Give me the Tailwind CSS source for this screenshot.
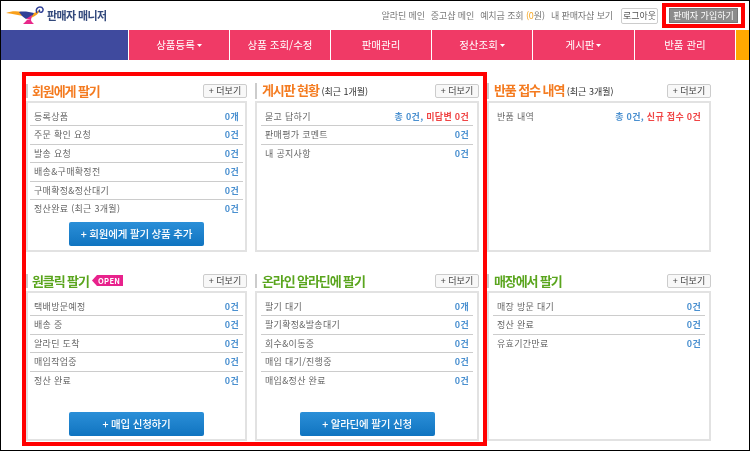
<!DOCTYPE html>
<html lang="ko">
<head>
    <meta charset="UTF-8">
    <title>판매자 매니저</title>
    <script src="https://cdn.jsdelivr.net/npm/@tailwindcss/browser@4"></script>
</head>
<body class="bg-white">
<div class="relative w-[750px] h-[451px] overflow-hidden border border-black bg-white text-[9px] text-[#666] font-['Noto_Sans_CJK_KR','Noto_Sans',sans-serif]">

    <!-- top bar -->
    <header class="h-[29px] flex items-center pl-[5px] pr-[11px] blur-[0.3px]">
        <svg width="38" height="18" viewBox="0 0 38 18" class="mt-[-1px]">
            <path d="M0 7 C5 5 11 5 16 6 L21 11 C14 9 7 8 0 7 Z" fill="#f9a01b"/>
            <path d="M26 8 L34 4 C33 7 30 10 25 12 Z" fill="#f9a01b"/>
            <path d="M13 6 C17 5 24 6 28 7 C27 10 24 12 20 13 C17 11 15 9 13 6 Z" fill="#2f3f96"/>
            <path d="M20 13 L26 9 L25 14 Z" fill="#e8288a"/>
            <path d="M17 18 C19 16 20 15 21 14 L25 14 C25 15 26 16 28 18 Z" fill="#e8288a"/>
            <path d="M31 7 C29 3 32 1 34 1 C37 1 38 4 36 6 C34 7 32 5 34 4" fill="none" stroke="#2f3f96" stroke-width="1.5"/>
        </svg>
        <span class="ml-[3px] text-[11px] font-bold text-[#33497c] tracking-[-0.6px]">판매자 매니저</span>
        <nav class="ml-auto flex items-center gap-[6px] text-[9px] text-[#777] tracking-[-0.1px]">
            <span>알라딘 메인</span>
            <span>중고샵 메인</span>
            <span>예치금 조회 <span class="text-[#f5a623]">(0</span>원)</span>
            <span>내 판매자샵 보기</span>
        </nav>
        <button class="ml-[8px] w-[37px] h-[16px] border border-[#ccc] rounded-[2px] text-[9px] text-[#555] bg-white">로그아웃</button>
        <button class="ml-[11px] w-[69px] h-[15px] border border-[#777] bg-[#8c8c8c] text-[9px] text-white">판매자 가입하기</button>
    </header>

    <!-- main menu -->
    <div class="h-[30px] flex text-[10.5px] text-white blur-[0.3px]">
        <div class="w-[127px] bg-[#3f4a9e] border-r border-white box-content"></div>
        <a class="w-[101px] border-r border-white bg-[#f03a66] flex items-center justify-center gap-[2px]">상품등록 <svg width="5" height="3" viewBox="0 0 5 3"><path d="M0 0H5L2.500 3Z" fill="#fff"/></svg></a>
        <a class="w-[101px] border-r border-white bg-[#f03a66] flex items-center justify-center">상품 조회/수정</a>
        <a class="w-[101px] border-r border-white bg-[#f03a66] flex items-center justify-center">판매관리</a>
        <a class="w-[101px] border-r border-white bg-[#f03a66] flex items-center justify-center gap-[2px]">정산조회 <svg width="5" height="3" viewBox="0 0 5 3"><path d="M0 0H5L2.500 3Z" fill="#fff"/></svg></a>
        <a class="w-[102px] border-r border-white bg-[#f03a66] flex items-center justify-center gap-[2px]">게시판 <svg width="5" height="3" viewBox="0 0 5 3"><path d="M0 0H5L2.500 3Z" fill="#fff"/></svg></a>
        <a class="w-[101px] border-r border-white bg-[#f03a66] flex items-center justify-center">반품 관리</a>
        <div class="flex-1 bg-[#ffa800]"></div>
    </div>

    <!-- dashboard -->
    <main class="grid grid-cols-[221px_224px_224px] grid-rows-[172px_171px] gap-x-[8px] gap-y-[18px] pl-[25px] pt-[20px] tracking-[0.3px] blur-[0.3px]">

        <section class="flex flex-col">
            <div class="h-[21px] flex items-center justify-between">
                <h2 class="border-l-2 border-[#ccc] pl-[4px] text-[13px] leading-[14px] font-bold text-[#f47b20] tracking-[-1.1px]">회원에게 팔기</h2>
                <button class="w-[44px] h-[14px] border border-[#ccc] rounded-[2px] bg-[#f8f8f8] text-[9px] leading-[12px] text-[#444] tracking-normal">+ 더보기</button>
            </div>
            <div class="flex-1 border-2 border-[#e2e2e2] px-[2px] pt-[5px] flex flex-col">
                <div class="h-[18.4px] flex items-center justify-between px-[4px] border-b border-[#ccc]"><span>등록상품</span><b class="font-bold text-[#4a90d0]">0개</b></div>
                <div class="h-[18.4px] flex items-center justify-between px-[4px] border-b border-[#ccc]"><span>주문 확인 요청</span><b class="font-bold text-[#4a90d0]">0건</b></div>
                <div class="h-[18.4px] flex items-center justify-between px-[4px] border-b border-[#ccc]"><span>발송 요청</span><b class="font-bold text-[#4a90d0]">0건</b></div>
                <div class="h-[18.4px] flex items-center justify-between px-[4px] border-b border-[#ccc]"><span>배송&amp;구매확정전</span><b class="font-bold text-[#4a90d0]">0건</b></div>
                <div class="h-[18.4px] flex items-center justify-between px-[4px] border-b border-[#ccc]"><span>구매확정&amp;정산대기</span><b class="font-bold text-[#4a90d0]">0건</b></div>
                <div class="h-[18.4px] flex items-center justify-between px-[4px]"><span>정산완료 (최근 3개월)</span><b class="font-bold text-[#4a90d0]">0건</b></div>
                <button class="mt-[4px] self-center w-[135px] h-[24px] rounded-[2px] bg-gradient-to-b from-[#2a8fd8] to-[#0f74c0] text-[10.5px] font-medium text-white tracking-[-0.2px]">+ 회원에게 팔기 상품 추가</button>
            </div>
        </section>

        <section class="flex flex-col">
            <div class="h-[21px] flex items-center justify-between">
                <h2 class="border-l-2 border-[#ccc] pl-[5px] text-[13px] leading-[14px] font-bold text-[#f47b20] tracking-[-1.1px]">게시판 현황 <span class="text-[9px] font-normal text-[#333] tracking-normal">(최근 1개월)</span></h2>
                <button class="w-[44px] h-[14px] border border-[#ccc] rounded-[2px] bg-[#f8f8f8] text-[9px] leading-[12px] text-[#444] tracking-normal">+ 더보기</button>
            </div>
            <div class="flex-1 border-2 border-[#e2e2e2] px-[4px] pt-[5px] flex flex-col">
                <div class="h-[18.4px] flex items-center justify-between px-[4px] border-b border-[#ccc]"><span>묻고 답하기</span><b class="font-bold text-[#4a90d0]">총 0건, <span class="text-[#f04545]">미답변 0건</span></b></div>
                <div class="h-[18.4px] flex items-center justify-between px-[4px] border-b border-[#ccc]"><span>판매평가 코멘트</span><b class="font-bold text-[#4a90d0]">0건</b></div>
                <div class="h-[18.4px] flex items-center justify-between px-[4px]"><span>내 공지사항</span><b class="font-bold text-[#4a90d0]">0건</b></div>
            </div>
        </section>

        <section class="flex flex-col">
            <div class="h-[21px] flex items-center justify-between">
                <h2 class="border-l-2 border-[#ccc] pl-[5px] text-[13px] leading-[14px] font-bold text-[#f47b20] tracking-[-1.1px]">반품 접수 내역 <span class="text-[9px] font-normal text-[#333] tracking-normal">(최근 3개월)</span></h2>
                <button class="w-[44px] h-[14px] border border-[#ccc] rounded-[2px] bg-[#f8f8f8] text-[9px] leading-[12px] text-[#444] tracking-normal">+ 더보기</button>
            </div>
            <div class="flex-1 border-2 border-[#e2e2e2] px-[4px] pt-[5px] flex flex-col">
                <div class="h-[18.4px] flex items-center justify-between px-[4px]"><span>반품 내역</span><b class="font-bold text-[#4a90d0]">총 0건, <span class="text-[#f04545]">신규 접수 0건</span></b></div>
            </div>
        </section>

        <section class="flex flex-col">
            <div class="h-[21px] flex items-center justify-between">
                <div class="flex items-center">
                    <h2 class="border-l-2 border-[#ccc] pl-[4px] text-[13px] leading-[14px] font-bold text-[#5aa51e] tracking-[-1.1px]">원클릭 팔기</h2>
                    <svg width="31" height="11" viewBox="0 0 31 11" class="ml-[3px]"><path d="M0 5.500 L5 0 H31 V11 H5 Z" fill="#e8228c"/><text x="6" y="8.500" font-size="7.500" font-weight="700" fill="#fff">OPEN</text></svg>
                </div>
                <button class="w-[44px] h-[14px] border border-[#ccc] rounded-[2px] bg-[#f8f8f8] text-[9px] leading-[12px] text-[#444] tracking-normal">+ 더보기</button>
            </div>
            <div class="flex-1 border-2 border-[#e2e2e2] px-[2px] pt-[5px] flex flex-col">
                <div class="h-[18.4px] flex items-center justify-between px-[4px] border-b border-[#ccc]"><span>택배방문예정</span><b class="font-bold text-[#4a90d0]">0건</b></div>
                <div class="h-[18.4px] flex items-center justify-between px-[4px] border-b border-[#ccc]"><span>배송 중</span><b class="font-bold text-[#4a90d0]">0건</b></div>
                <div class="h-[18.4px] flex items-center justify-between px-[4px] border-b border-[#ccc]"><span>알라딘 도착</span><b class="font-bold text-[#4a90d0]">0건</b></div>
                <div class="h-[18.4px] flex items-center justify-between px-[4px] border-b border-[#ccc]"><span>매입작업중</span><b class="font-bold text-[#4a90d0]">0건</b></div>
                <div class="h-[18.4px] flex items-center justify-between px-[4px]"><span>정산 완료</span><b class="font-bold text-[#4a90d0]">0건</b></div>
                <button class="mt-auto mb-[3px] self-center w-[135px] h-[24px] rounded-[2px] bg-gradient-to-b from-[#2a8fd8] to-[#0f74c0] text-[10.5px] font-medium text-white tracking-[-0.2px]">+ 매입 신청하기</button>
            </div>
        </section>

        <section class="flex flex-col">
            <div class="h-[21px] flex items-center justify-between">
                <h2 class="border-l-2 border-[#ccc] pl-[5px] text-[13px] leading-[14px] font-bold text-[#5aa51e] tracking-[-1.1px]">온라인 알라딘에 팔기</h2>
                <button class="w-[44px] h-[14px] border border-[#ccc] rounded-[2px] bg-[#f8f8f8] text-[9px] leading-[12px] text-[#444] tracking-normal">+ 더보기</button>
            </div>
            <div class="flex-1 border-2 border-[#e2e2e2] px-[4px] pt-[5px] flex flex-col">
                <div class="h-[18.4px] flex items-center justify-between px-[4px] border-b border-[#ccc]"><span>팔기 대기</span><b class="font-bold text-[#4a90d0]">0개</b></div>
                <div class="h-[18.4px] flex items-center justify-between px-[4px] border-b border-[#ccc]"><span>팔기확정&amp;발송대기</span><b class="font-bold text-[#4a90d0]">0건</b></div>
                <div class="h-[18.4px] flex items-center justify-between px-[4px] border-b border-[#ccc]"><span>회수&amp;이동중</span><b class="font-bold text-[#4a90d0]">0건</b></div>
                <div class="h-[18.4px] flex items-center justify-between px-[4px] border-b border-[#ccc]"><span>매입 대기/진행중</span><b class="font-bold text-[#4a90d0]">0건</b></div>
                <div class="h-[18.4px] flex items-center justify-between px-[4px]"><span>매입&amp;정산 완료</span><b class="font-bold text-[#4a90d0]">0건</b></div>
                <button class="mt-auto mb-[3px] self-center w-[135px] h-[24px] rounded-[2px] bg-gradient-to-b from-[#2a8fd8] to-[#0f74c0] text-[10.5px] font-medium text-white tracking-[-0.2px]">+ 알라딘에 팔기 신청</button>
            </div>
        </section>

        <section class="flex flex-col">
            <div class="h-[21px] flex items-center justify-between">
                <h2 class="border-l-2 border-[#ccc] pl-[5px] text-[13px] leading-[14px] font-bold text-[#5aa51e] tracking-[-1.1px]">매장에서 팔기</h2>
                <button class="w-[44px] h-[14px] border border-[#ccc] rounded-[2px] bg-[#f8f8f8] text-[9px] leading-[12px] text-[#444] tracking-normal">+ 더보기</button>
            </div>
            <div class="flex-1 border-2 border-[#e2e2e2] px-[4px] pt-[5px] flex flex-col">
                <div class="h-[18.4px] flex items-center justify-between px-[4px] border-b border-[#ccc]"><span>매장 방문 대기</span><b class="font-bold text-[#4a90d0]">0건</b></div>
                <div class="h-[18.4px] flex items-center justify-between px-[4px] border-b border-[#ccc]"><span>정산 완료</span><b class="font-bold text-[#4a90d0]">0건</b></div>
                <div class="h-[18.4px] flex items-center justify-between px-[4px]"><span>유효기간만료</span><b class="font-bold text-[#4a90d0]">0건</b></div>
            </div>
        </section>
    </main>

    <!-- red annotation boxes drawn over the screenshot -->
    <div class="absolute left-[21px] top-[71px] w-[465px] h-[374px] border-[4px] border-[#ff0000]"></div>
    <div class="absolute left-[661px] top-[2px] w-[83px] h-[25px] border-[4px] border-[#ff0000]"></div>
</div>
</body>
</html>
